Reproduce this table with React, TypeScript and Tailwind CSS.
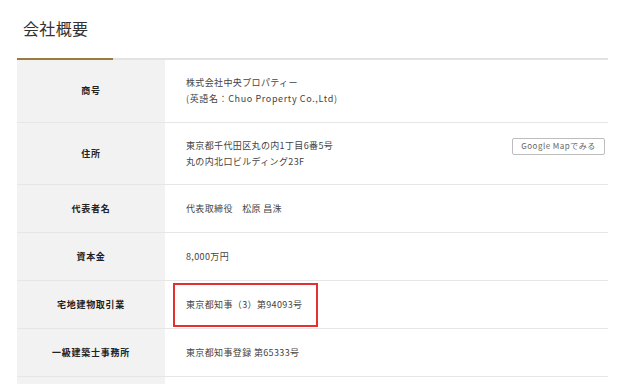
import type { ReactNode } from "react";

const font = {
  fontFamily: '"Noto Sans CJK JP", "Noto Sans", sans-serif',
};

type Row = {
  label: string;
  h: string;
  body: ReactNode;
  marked?: boolean;
};

const rows: Row[] = [
  {
    label: "商号",
    h: "h-[63px]",
    body: (
      <>
        <p>株式会社中央プロパティー</p>
        <p className="tracking-[0.07em]">(英語名：Chuo Property Co.,Ltd)</p>
      </>
    ),
  },
  {
    label: "住所",
    h: "h-[62px]",
    body: (
      <>
        <p>東京都千代田区丸の内1丁目6番5号</p>
        <p>丸の内北口ビルディング23F</p>
      </>
    ),
  },
  { label: "代表者名", h: "h-[48px]", body: <p>代表取締役　松原 昌洙</p> },
  { label: "資本金", h: "h-[48px]", body: <p>8,000万円</p> },
  {
    label: "宅地建物取引業",
    h: "h-[48px]",
    body: <p>東京都知事（3）第94093号</p>,
    marked: true,
  },
  { label: "一級建築士事務所", h: "h-[48px]", body: <p>東京都知事登録 第65333号</p> },
  // next row begins below the fold
  { label: "", h: "h-[48px]", body: null },
];

export default function App() {
  return (
    <div className="h-[384px] w-[640px] overflow-hidden bg-white" style={font}>
      <h1 className="px-[23px] pt-[16px] text-[16px] leading-[24px] tracking-[0.02em] text-[#333]">
        会社概要
      </h1>

      <div className="ml-[17px] mt-[18px] w-[591px]">
        {/* heading rule with the short accent on the left */}
        <div className="flex h-[2px] bg-[#e2e2e2]">
          <div className="w-[96px] bg-[#9a7a3e]" />
        </div>

        {rows.map((r, i) => (
          <div key={i} className={`flex border-b border-[#e6e6e6] ${r.h}`}>
            <div className="flex w-[148px] shrink-0 items-center justify-center bg-[#f2f2f2] text-[9px] font-bold tracking-[0.08em] text-[#222]">
              {r.label}
            </div>
            <div className="relative flex flex-1 items-center pl-[21px] pr-[3px] text-[9px] leading-[16px] tracking-[0.04em] text-[#444]">
              <div className="flex flex-1 items-start justify-between">
                <div>{r.body}</div>
                {r.label === "住所" && (
                  <button
                    type="button"
                    className="h-[17px] w-[93px] rounded-[2px] border border-[#bdbdbd] bg-white text-[8px] leading-none tracking-[0.06em] text-[#666]"
                  >
                    Google Mapでみる
                  </button>
                )}
              </div>
              {r.marked && (
                <span className="absolute left-[8px] top-[2px] h-[44px] w-[145px] border-2 border-[#e53030]" />
              )}
            </div>
          </div>
        ))}
      </div>
    </div>
  );
}
